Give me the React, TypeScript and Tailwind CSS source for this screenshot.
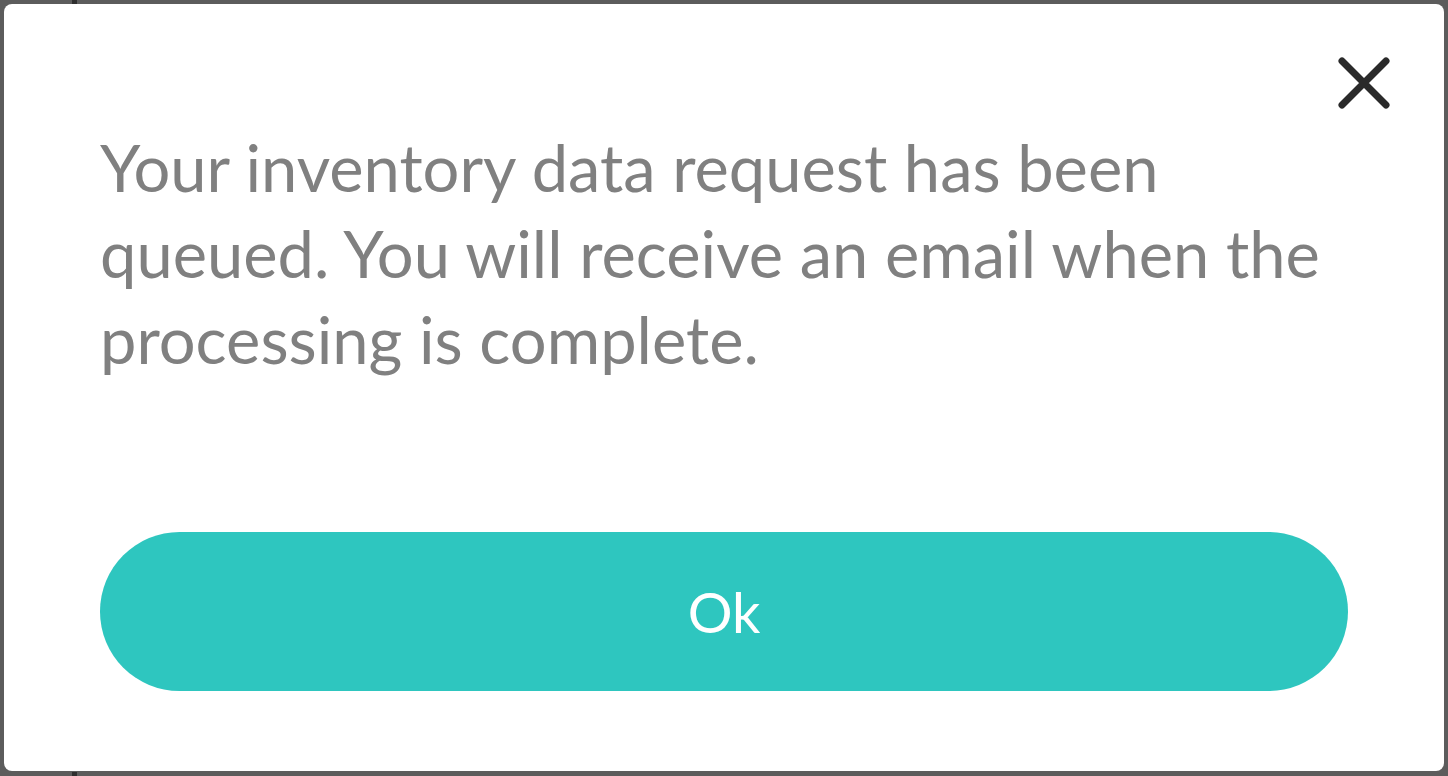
import React from "react";

export default function App() {
  return (
    <div className="w-[1448px] h-[776px] bg-[#5c5c5c] p-[4px] overflow-hidden relative" style={{ fontFamily: "Lato, 'Open Sans', sans-serif" }}>
      <div className="absolute left-[72px] top-0 w-[5px] h-[4px] bg-[#2e2e2e]" />
      <div className="absolute left-[72px] bottom-0 w-[5px] h-[4px] bg-[#2e2e2e]" />
      <div className="w-[1440px] h-[767px] bg-white rounded-[8px] flex flex-col relative">
        <button className="absolute left-[1334px] top-[53px] w-[52px] h-[52px] flex items-center justify-center">
          <svg width="52" height="52" viewBox="0 0 52 52" fill="none">
            <path d="M4 4L48 48M48 4L4 48" stroke="#2a2a2a" strokeWidth="7" strokeLinecap="round" />
          </svg>
        </button>
        <div className="pl-[96px] pr-[96px] pt-[120px]">
          <p className="text-[65px] leading-[86px] text-[#808080] m-0">
            Your inventory data request has been queued. You will receive an email when the processing is complete.
          </p>
        </div>
        <div className="px-[96px] pt-[150px]">
          <button className="w-full h-[159px] rounded-full bg-[#2ec6bf] text-white text-[56px] flex items-center justify-center">
            Ok
          </button>
        </div>
      </div>
    </div>
  );
}
